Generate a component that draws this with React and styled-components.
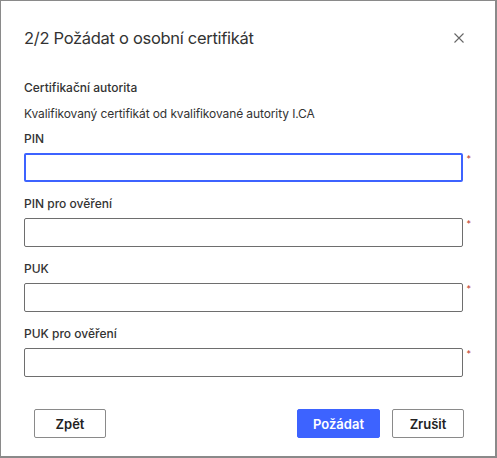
import React from "react";
import styled, { createGlobalStyle } from "styled-components";

const GlobalStyle = createGlobalStyle`
  html, body {
    margin: 0;
    padding: 0;
    background: #ffffff;
  }
  * {
    box-sizing: border-box;
  }
`;

// DIALOG FRAME
const Dialog = styled.div`
  width: 497px;
  height: 458px;
  border: 1px solid #8a8a8a;
  border-right-width: 2px;
  border-bottom-width: 2px;
  background: #ffffff;
  display: flex;
  flex-direction: column;
  font-family: Inter, "Noto Sans", sans-serif;
  color: #333333;
`;

// HEADER
const Header = styled.div`
  display: flex;
  align-items: center;
  justify-content: space-between;
  padding: 25px 30px 0 23px;
`;

const Title = styled.h2`
  margin: 0;
  font-size: 16.5px;
  line-height: 24px;
  font-weight: 400;
  color: #333333;
  letter-spacing: -0.3px;
`;

const CloseButton = styled.button`
  border: none;
  background: none;
  padding: 0;
  width: 12px;
  height: 12px;
  display: flex;
  align-items: center;
  justify-content: center;
  cursor: pointer;
`;

// BODY
const Body = styled.div`
  padding: 0 24px 0 23px;
  display: flex;
  flex-direction: column;
`;

const SectionTitle = styled.div`
  margin-top: 30px;
  font-size: 12px;
  line-height: 16px;
  font-weight: 500;
`;

const SectionText = styled.div`
  margin-top: 10px;
  font-size: 12px;
  line-height: 16px;
  font-weight: 400;
  letter-spacing: -0.1px;
`;

const Fields = styled.div`
  margin-top: 9px;
  display: flex;
  flex-direction: column;
  gap: 14px;
`;

const Field = styled.div`
  display: flex;
  flex-direction: column;
  gap: 6px;
`;

const Label = styled.label`
  font-size: 12px;
  line-height: 16px;
  font-weight: 500;
`;

const InputRow = styled.div`
  display: flex;
  align-items: flex-start;
  gap: 3px;
`;

const Input = styled.input`
  width: 441px;
  height: 29px;
  border: ${(p) => (p.$focused ? "2px solid #3d63ff" : "1px solid #6e6e6e")};
  border-radius: 2px;
  outline: none;
  padding: 0 8px;
  font-family: inherit;
  font-size: 12px;
  background: #ffffff;
`;

const Required = styled.span`
  color: #c0392b;
  font-size: 9px;
  line-height: 10px;
  margin-top: 1px;
`;

// FOOTER
const Footer = styled.div`
  margin-top: 32px;
  display: flex;
  align-items: center;
  padding: 0 31px 0 33px;
  gap: 12px;
`;

const Button = styled.button`
  height: 29px;
  min-width: ${(p) => p.$width || 72}px;
  border-radius: 2px;
  border: 1px solid ${(p) => (p.$primary ? "#3d63ff" : "#8a8a8a")};
  background: ${(p) => (p.$primary ? "#3d63ff" : "#ffffff")};
  color: ${(p) => (p.$primary ? "#ffffff" : "#222222")};
  font-family: inherit;
  font-size: 13px;
  font-weight: 600;
  padding: 0 10px;
  cursor: pointer;
`;

const Spacer = styled.div`
  flex: 1;
`;

const fields = [
  { label: "PIN", focused: true },
  { label: "PIN pro ověření" },
  { label: "PUK" },
  { label: "PUK pro ověření" },
];

export default function App() {
  return (
    <>
      <GlobalStyle />
      <Dialog>
        <Header>
          <Title>2/2 Požádat o osobní certifikát</Title>
          <CloseButton aria-label="Zavřít">
            <svg width="10" height="10" viewBox="0 0 10 10">
              <path d="M0.5 0.5 L9.5 9.5 M9.5 0.5 L0.5 9.5" stroke="#666" strokeWidth="1.1" />
            </svg>
          </CloseButton>
        </Header>
        <Body>
          <SectionTitle>Certifikační autorita</SectionTitle>
          <SectionText>Kvalifikovaný certifikát od kvalifikované autority I.CA</SectionText>
          <Fields>
            {fields.map((f) => (
              <Field key={f.label}>
                <Label>{f.label}</Label>
                <InputRow>
                  <Input type="password" $focused={f.focused} />
                  <Required>*</Required>
                </InputRow>
              </Field>
            ))}
          </Fields>
        </Body>
        <Footer>
          <Button>Zpět</Button>
          <Spacer />
          <Button $primary $width={83}>Požádat</Button>
          <Button>Zrušit</Button>
        </Footer>
      </Dialog>
    </>
  );
}
